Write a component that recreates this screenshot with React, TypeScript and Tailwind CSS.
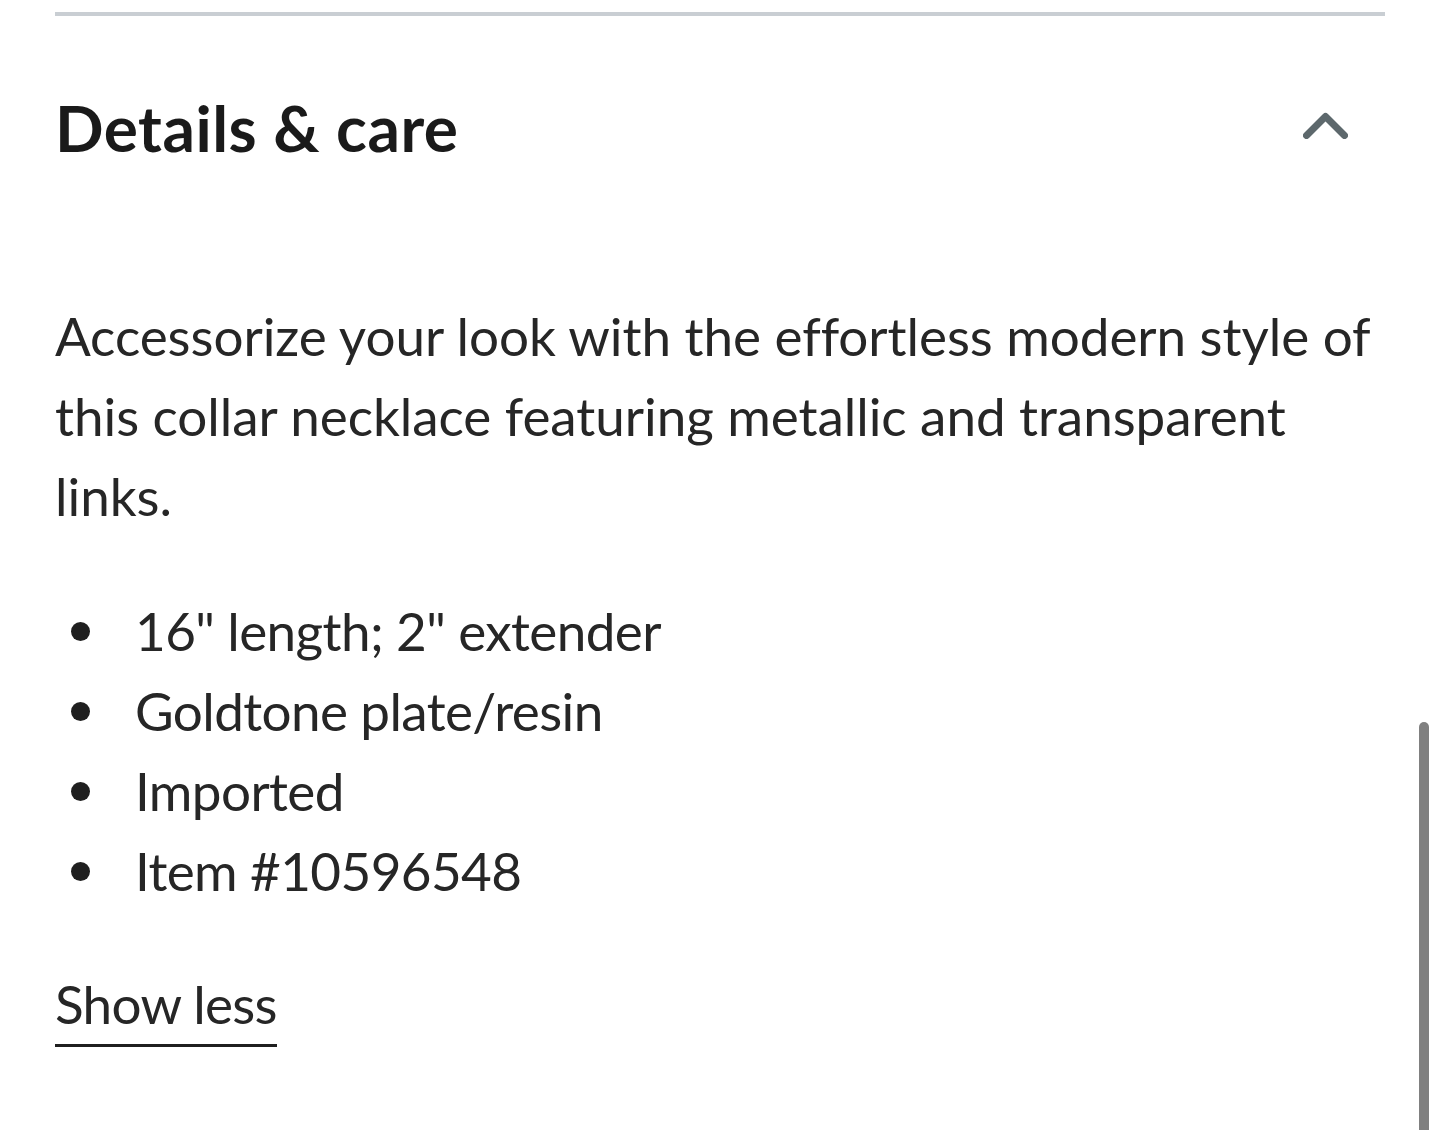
import React from 'react'

const specs = ['16" length; 2" extender', 'Goldtone plate/resin', 'Imported', 'Item #10596548']

function ChevronUp() {
  return (
    <svg width="45" height="27" viewBox="0 0 45 27" fill="none" className="mb-[5px] mr-[37px]">
      <polyline
        points="3.5,23.5 22.5,4.5 41.5,23.5"
        stroke="#5d686c"
        strokeWidth="7"
        strokeLinecap="round"
        strokeLinejoin="round"
      />
    </svg>
  )
}

export default function App() {
  return (
    <div className="relative w-[1440px] h-[1130px] overflow-hidden bg-white font-['Lato',sans-serif] text-[#262626]">
      <div className="px-[55px]">
        {/* divisor do topo */}
        <div className="mt-[12px] h-[4px] bg-[#c9ced3]" />

        {/* cabeçalho da seção */}
        <div className="mt-[72px] flex items-center justify-between">
          <h2 className="text-[64px] leading-[80px] font-bold tracking-[0.5px] text-[#1a1a1a]">Details &amp; care</h2>
          <ChevronUp />
        </div>

        <p className="mt-[128px] text-[53px] leading-[80px] tracking-[-0.05px]">
          Accessorize your look with the effortless modern style of this collar necklace featuring metallic and
          transparent links.
        </p>

        <ul className="mt-[55px]">
          {specs.map((s) => (
            <li key={s} className="flex items-center text-[53px] leading-[80px] tracking-[-0.6px]">
              <span className="ml-[16px] mr-[45px] h-[19px] w-[19px] shrink-0 rounded-full bg-[#1f1f1f]" />
              <span>{s}</span>
            </li>
          ))}
        </ul>

        <div className="mt-[53px]">
          <button className="inline-block border-b-[3px] border-[#1f1f1f] text-[53px] leading-[80px] tracking-[-0.7px] text-[#262626]">
            Show less
          </button>
        </div>
      </div>

      {/* barra de rolagem */}
      <div className="absolute left-[1419px] top-[722px] h-[420px] w-[10px] rounded-full bg-[#808080]" />
    </div>
  )
}
